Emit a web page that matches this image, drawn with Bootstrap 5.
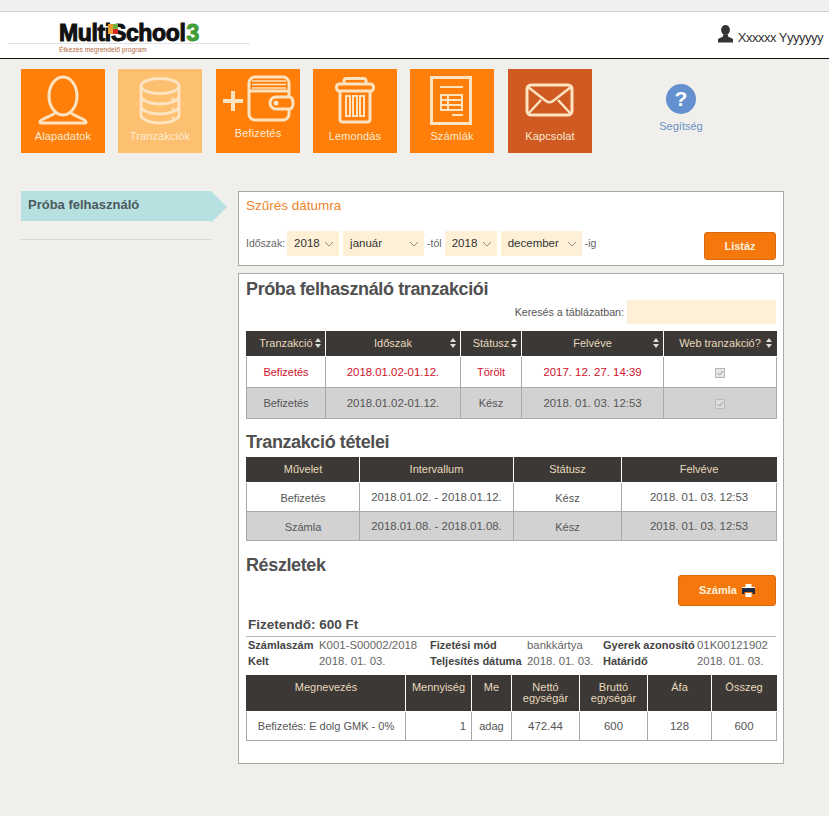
<!DOCTYPE html>
<html lang="hu">
<head>
  <meta charset="UTF-8" />
  <meta name="viewport" content="width=device-width, initial-scale=1.0" />
  <title>MultiSchool3</title>
  <link rel="stylesheet" href="https://cdn.jsdelivr.net/npm/bootstrap@5.3.0/dist/css/bootstrap.min.css">
  <style>
    body {
      font-family: "Liberation Sans", Arial, sans-serif;
      font-size: 11px;
      background-color: #f1efeb;
      color: #555;
      height: 816px;
      overflow: hidden;
    }
    .top-strip { height: 12px; background: #f0f0f0; border-bottom: 1px solid #ccc; }
    .site-head { height: 47px; background: #fff; border-bottom: 1px solid #111; padding-right: 6px; }
    .logo-box { width: 250px; height: 46px; position: relative; }
    .logo-rule { position: absolute; left: 8px; right: 0; top: 31px; border-top: 1px solid #e2e2e2; }
    .logo-name {
      position: absolute; left: 59px; top: 11px; font-size: 23px; line-height: 21px; font-weight: 700;
      color: #111; -webkit-text-stroke: 1px #111; letter-spacing: -.35px; white-space: nowrap;
    }
    .logo-name b { color: #3f9e35; -webkit-text-stroke: 1px #3f9e35; margin-left: 1px; }
    .logo-dots { position: absolute; left: 108px; top: 12px; }
    .logo-sub { position: absolute; left: 59px; top: 33px; font-size: 6.7px; line-height: 9px; color: #b5683c; white-space: nowrap; }
    .user-name { font-size: 13px; line-height: 16px; color: #333; letter-spacing: -.5px; align-self: flex-start; padding-top: 13px; }
    .user-name span { margin-top: 5px; }
    .tile-row { padding: 10px 0 0 21px; height: 132px; }
    .tile {
      width: 84px; height: 84px; background: #ff7f0a; color: #fdebd3; margin-right: 13px;
      text-decoration: none; font-size: 11px; letter-spacing: .15px; text-align: center; display: block; padding-top: 6px;
    }
    .tile svg { display: block; height: 50px; width: 84px; }
    .tile span { display: block; margin-top: 4px; line-height: 14px; }
    .tile.tile-soft { background: #fdc070; }
    .tile.tile-dark { background: #cf5a22; }
    .tile.tile-up span { margin-top: 1px; }
    .tile.tile-shift { margin-left: 1px; }
    .help-tile { width: 84px; margin-left: 34px; text-align: center; color: #6b90c8; padding-top: 15px; }
    .help-tile i {
      display: block; width: 30px; height: 30px; margin: 0 auto 4px; border-radius: 50%; background: #6590cf;
      color: #fff; font-style: normal; font-weight: 700; font-size: 21px; line-height: 30px;
    }
    .page-body { padding: 0 0 0 21px; }
    .side-col { width: 217px; flex: none; }
    .side-title {
      height: 30px; width: 190px; background: #b7e0e0; color: #4b5a5c; font-weight: 700; font-size: 13px;
      line-height: 27px; padding-left: 7px; position: relative; white-space: nowrap;
    }
    .side-title::after {
      content: ""; position: absolute; left: 100%; top: 0;
      border-left: 16px solid #b7e0e0; border-top: 16px solid transparent; border-bottom: 16px solid transparent;
    }
    .side-rule { width: 190px; margin-top: 18px; border-top: 1px solid #d8d6d2; }
    .main-col { width: 546px; flex: none; }
    .panel-box { background: #fff; border: 1px solid #a9a9a5; padding: 0 7px; }
    .filter-panel { height: 75px; margin-bottom: 7px; }
    .filter-title { color: #f0842c; font-size: 13.5px; line-height: 18px; padding-top: 5px; height: 39px; }
    .filter-row { font-size: 10.5px; color: #666; }
    .filter-row .form-select {
      width: auto; height: 25px; padding: 0 0 0 7px; border: 0; border-radius: 0; background-color: #fdf0d7;
      color: #333; font-size: 11.5px; flex: none;
      background-size: 10px 6px; background-position: right 5px center;
      background-image: url("data:image/svg+xml,%3csvg xmlns='http://www.w3.org/2000/svg' viewBox='0 0 10 6'%3e%3cpath fill='none' stroke='%23777' stroke-width='.8' d='M1 1l4 4 4-4'/%3e%3c/svg%3e");
    }
    .sel-year { flex-basis: 52px !important; width: 52px !important; margin-right: 4px; }
    .sel-month { flex-basis: 81px !important; width: 81px !important; }
    .range-word { line-height: 25px; }
    .range-from { margin: 0 3px; }
    .range-to { margin-left: 3px; }
    .range-lead { margin-right: 2px; }
    .orange-btn {
      background: #f6780c; border: 1px solid #d9690c; border-radius: 3px; color: #fdf0df; font-weight: 700;
      font-size: 11px; padding: 0; line-height: 1;
    }
    .orange-btn:hover { background: #e56e08; color: #fff; }
    .list-btn { width: 72px; height: 28px; margin-left: auto; margin-top: 1px; }
    .result-panel { height: 491px; }
    .box-head { color: #505050; font-size: 18px; letter-spacing: -.38px; line-height: 22px; font-weight: 700; margin: 0; }
    .box-first { padding-top: 4px; }
    .search-row { height: 24px; margin-bottom: 7px; font-size: 10.7px; color: #555; }
    .search-row .form-control {
      width: 149px; height: 24px; border: 0; border-radius: 0; background: #fdf0d7; margin-left: 3px; padding: 0 5px;
    }
    .grid-tbl { width: 530px; table-layout: fixed; border-collapse: collapse; margin: 0; font-size: 11px; }
    .grid-tbl th {
      background: #3b3835; color: #e8d9bd; font-weight: 400; text-align: center; vertical-align: middle;
      padding: 0 2px; border: 1px solid #fff; border-top: 0; position: relative; line-height: 11px;
    }
    .grid-tbl th:first-child { border-left-color: #3b3835; }
    .grid-tbl th:last-child { border-right-color: #3b3835; }
    .grid-tbl td {
      text-align: center; vertical-align: middle; padding: 2px 2px 0; border: 1px solid #a9a9a9; color: #555; background: #fff;
    }
    .grid-tbl td.digits { font-size: 11.4px; }
    .grid-tbl .row-gray td { background: #d2d2d2; }
    .grid-tbl .row-red td { color: #d0102a; }
    .sort-mark { position: absolute; right: 4px; top: 50%; margin-top: -5px; width: 6px; height: 10px; }
    .tick-box { display: block; margin: 0 auto; width: 10px; height: 10px; }
    .tbl-main .hrow { height: 25px; }
    .tbl-main .brow { height: 31px; }
    .tbl-items .hrow { height: 26px; }
    .tbl-items .brow { height: 29px; }
    .h-second { margin-top: 12px; margin-bottom: 4px; }
    .h-third { margin-top: 13px; }
    .invoice-btn-row { height: 31px; margin-top: -1px; }
    .invoice-btn { width: 98px; height: 31px; margin-left: auto; display: flex; align-items: center; justify-content: center; gap: 5px; }
    .pay-line {
      margin: 9px 0 0; padding: 0 2px; height: 22px; font-size: 13.5px; line-height: 19px; font-weight: 700; color: #4a4a4a;
      border-bottom: 1px solid #b5b5b5; width: 530px;
    }
    .facts { width: 530px; padding-left: 2px; font-size: 11px; line-height: 16px; color: #666; height: 38px; white-space: nowrap; }
    .facts b { color: #444; }
    .facts span { font-size: 11.4px; }
    .f1 { width: 71px; } .f2 { width: 111px; } .f3 { width: 97px; } .f4 { width: 76px; } .f5 { width: 94px; } .f6 { flex: 1; }
    .tbl-invoice th { vertical-align: top; padding-top: 7px; }
    .tbl-invoice .hrow { height: 36px; }
    .tbl-invoice .brow { height: 29px; }
    .tbl-invoice td.num-right { text-align: right; padding-right: 5px; }
    .c1a { width: 79px; } .c1b { width: 135px; } .c1c { width: 61px; } .c1d { width: 142px; } .c1e { width: 113px; }
    .c2a { width: 113px; } .c2b { width: 154px; } .c2c { width: 108px; } .c2d { width: 155px; }
    .c3a { width: 159px; } .c3b { width: 66px; } .c3c { width: 40px; } .c3d { width: 68px; } .c3e { width: 68px; } .c3f { width: 64px; } .c3g { width: 65px; }
  </style>
</head>
<body>
  <div class="top-strip"></div>
  <header class="site-head d-flex justify-content-between align-items-center">
    <div class="logo-box">
      <div class="logo-rule"></div>
      <div class="logo-name">MultiSchool<b>3</b></div>
      <svg class="logo-dots" width="10" height="10" viewBox="0 0 10 10">
        <rect x="0" y="0" width="5" height="5" fill="#e8962a"/><rect x="5" y="0" width="5" height="5" fill="#6fb23c"/>
        <rect x="0" y="5" width="5" height="5" fill="#f0a23a"/><rect x="5" y="5" width="5" height="5" fill="#d92a20"/>
      </svg>
      <div class="logo-sub">Étkezés megrendelő program</div>
    </div>
    <div class="d-flex align-items-start user-name">
      <svg width="17" height="18" viewBox="0 0 17 18" class="me-1"><ellipse cx="8.500" cy="5" rx="4.400" ry="5" fill="#333"/><path d="M6 9.500v2L1 14v3.500h15V14l-5-2.500v-2z" fill="#333"/></svg>
      <span>Xxxxxx Yyyyyyy</span>
    </div>
  </header>

  <nav class="tile-row d-flex">
    <a class="tile" href="#">
      <svg viewBox="0 0 84 50" fill="none" stroke="#fde3c0" stroke-width="3"><ellipse cx="42" cy="21" rx="14" ry="19"/><path d="M35 36c0 5-16 7-16 11 0 .6.500 1 1 1h44c.6 0 1-.4 1-1 0-4-16-6-16-11"/></svg>
      <span>Alapadatok</span>
    </a>
    <a class="tile tile-soft" href="#">
      <svg viewBox="0 0 84 50" fill="none" stroke="#fde3c0" stroke-width="3"><ellipse cx="42" cy="11" rx="19" ry="7.500"/><path d="M23 11v29c0 4 8 8 19 8s19-4 19-8V11M23 21c0 4 8 8 19 8s19-4 19-8M23 31c0 4 8 8 19 8s19-4 19-8"/><g fill="#fde3c0" stroke="none"><circle cx="55" cy="24" r="1.500"/><circle cx="55" cy="34" r="1.500"/><circle cx="55" cy="43" r="1.500"/></g></svg>
      <span>Tranzakciók</span>
    </a>
    <a class="tile tile-up tile-shift" href="#">
      <svg viewBox="0 0 84 50" fill="none" stroke="#fde3c0" stroke-width="3"><path d="M7 26h20M17 16v20" stroke-width="4"/><rect x="33" y="2" width="40" height="43" rx="6"/><path d="M36 6h34M36 9.500h34M36 13h34" stroke-width="1.500"/><path d="M33 16h40"/><path d="M73 22h-13a6 6 0 0 0 0 12h13c3 0 4-3 4-6s-1-6-4-6z" fill="#ff7f0a"/><circle cx="60" cy="28" r="2.500" fill="#fde3c0" stroke="none"/></svg>
      <span>Befizetés</span>
    </a>
    <a class="tile" href="#">
      <svg viewBox="0 0 84 50" fill="none" stroke="#fde3c0" stroke-width="3"><path d="M31 9V6c0-1.500 1-2.500 2.500-2.500h17C52 3.500 53 4.500 53 6v3"/><rect x="23.500" y="9" width="37" height="7" rx="3"/><path d="M27 16v28c0 2 1 3 3 3h24c2 0 3-1 3-3V16"/><rect x="33" y="21" width="4" height="20" stroke-width="2"/><rect x="40" y="21" width="4" height="20" stroke-width="2"/><rect x="47" y="21" width="4" height="20" stroke-width="2"/></svg>
      <span>Lemondás</span>
    </a>
    <a class="tile" href="#">
      <svg viewBox="0 0 84 50" fill="none" stroke="#fde3c0" stroke-width="3"><rect x="21.500" y="2.500" width="39" height="46"/><path d="M30 12h23M42 40h11" stroke-width="2"/><rect x="31" y="20" width="21" height="15" stroke-width="2"/><path d="M31 25h21M31 30h21M38 20v15" stroke-width="2"/></svg>
      <span>Számlák</span>
    </a>
    <a class="tile tile-dark tile-shift" href="#">
      <svg viewBox="0 0 84 50" fill="none" stroke="#fde3c0" stroke-width="3"><rect x="19" y="10" width="45" height="30" rx="4"/><path d="M20 12l18 14c2 1.500 5 1.500 7 0l18-14M20 39l13-14M63 39L50 25" stroke-width="2.500"/></svg>
      <span>Kapcsolat</span>
    </a>
    <a class="help-tile text-decoration-none" href="#"><i>?</i>Segítség</a>
  </nav>

  <div class="page-body d-flex">
    <aside class="side-col">
      <div class="side-title">Próba felhasználó</div>
      <div class="side-rule"></div>
    </aside>
    <main class="main-col">
      <section class="panel-box filter-panel">
        <div class="filter-title">Szűrés dátumra</div>
        <div class="filter-row d-flex align-items-start">
          <span class="range-word range-lead">Időszak:</span>
          <select class="form-select sel-year"><option>2018</option></select>
          <select class="form-select sel-month"><option>január</option></select>
          <span class="range-word range-from">-tól</span>
          <select class="form-select sel-year"><option>2018</option></select>
          <select class="form-select sel-month"><option>december</option></select>
          <span class="range-word range-to">-ig</span>
          <button class="btn orange-btn list-btn" type="button">Listáz</button>
        </div>
      </section>

      <section class="panel-box result-panel">
        <h2 class="box-head box-first">Próba felhasználó tranzakciói</h2>
        <div class="search-row d-flex justify-content-end align-items-center">
          <label for="tblSearch">Keresés a táblázatban:</label>
          <input id="tblSearch" class="form-control" type="text">
        </div>
        <table class="grid-tbl tbl-main">
          <colgroup><col class="c1a"><col class="c1b"><col class="c1c"><col class="c1d"><col class="c1e"></colgroup>
          <thead><tr class="hrow">
            <th>Tranzakció<svg class="sort-mark" viewBox="0 0 6 10"><path d="M3 0l3 4H0zM3 10L0 6h6z" fill="#ddd"/></svg></th>
            <th>Időszak<svg class="sort-mark" viewBox="0 0 6 10"><path d="M3 0l3 4H0zM3 10L0 6h6z" fill="#ddd"/></svg></th>
            <th>Státusz<svg class="sort-mark" viewBox="0 0 6 10"><path d="M3 0l3 4H0zM3 10L0 6h6z" fill="#ddd"/></svg></th>
            <th>Felvéve<svg class="sort-mark" viewBox="0 0 6 10"><path d="M3 0l3 4H0zM3 10L0 6h6z" fill="#ddd"/></svg></th>
            <th>Web tranzakció?<svg class="sort-mark" viewBox="0 0 6 10"><path d="M3 0l3 4H0zM3 10L0 6h6z" fill="#ddd"/></svg></th>
          </tr></thead>
          <tbody>
            <tr class="brow row-red"><td>Befizetés</td><td class="digits">2018.01.02-01.12.</td><td>Törölt</td><td class="digits">2017. 12. 27. 14:39</td><td><svg class="tick-box" viewBox="0 0 10 10"><rect x=".5" y=".5" width="9" height="9" fill="#e6e6e6" stroke="#b5b5b5"/><path d="M2.500 5l2 2 3.500-4" fill="none" stroke="#8f8f8f"/></svg></td></tr>
            <tr class="brow row-gray"><td>Befizetés</td><td class="digits">2018.01.02-01.12.</td><td>Kész</td><td class="digits">2018. 01. 03. 12:53</td><td><svg class="tick-box" viewBox="0 0 10 10"><rect x=".5" y=".5" width="9" height="9" fill="#dcdcdc" stroke="#bdbdbd"/><path d="M2.500 5l2 2 3.500-4" fill="none" stroke="#999"/></svg></td></tr>
          </tbody>
        </table>

        <h2 class="box-head h-second">Tranzakció tételei</h2>
        <table class="grid-tbl tbl-items">
          <colgroup><col class="c2a"><col class="c2b"><col class="c2c"><col class="c2d"></colgroup>
          <thead><tr class="hrow"><th>Művelet</th><th>Intervallum</th><th>Státusz</th><th>Felvéve</th></tr></thead>
          <tbody>
            <tr class="brow"><td>Befizetés</td><td class="digits">2018.01.02. - 2018.01.12.</td><td>Kész</td><td class="digits">2018. 01. 03. 12:53</td></tr>
            <tr class="brow row-gray"><td>Számla</td><td class="digits">2018.01.08. - 2018.01.08.</td><td>Kész</td><td class="digits">2018. 01. 03. 12:53</td></tr>
          </tbody>
        </table>

        <h2 class="box-head h-third">Részletek</h2>
        <div class="invoice-btn-row d-flex">
          <button class="btn orange-btn invoice-btn" type="button">Számla
            <svg width="13" height="13" viewBox="0 0 13 13"><path d="M3.500 0h6v3.500h-6z" fill="#fff"/><path d="M0 4h13v6h-2.500V8h-8v2H0z" fill="#1f2a44"/><path d="M3.500 9h6v4h-6z" fill="#fff"/><path d="M0 3.500h13" stroke="#fff"/></svg>
          </button>
        </div>
        <div class="pay-line">Fizetendő: 600 Ft</div>
        <div class="facts">
          <div class="d-flex">
            <b class="f1">Számlaszám</b><span class="f2">K001-S00002/2018</span><b class="f3">Fizetési mód</b><span class="f4">bankkártya</span><b class="f5">Gyerek azonosító</b><span class="f6">01K00121902</span>
          </div>
          <div class="d-flex">
            <b class="f1">Kelt</b><span class="f2">2018. 01. 03.</span><b class="f3">Teljesítés dátuma</b><span class="f4">2018. 01. 03.</span><b class="f5">Határidő</b><span class="f6">2018. 01. 03.</span>
          </div>
        </div>
        <table class="grid-tbl tbl-invoice">
          <colgroup><col class="c3a"><col class="c3b"><col class="c3c"><col class="c3d"><col class="c3e"><col class="c3f"><col class="c3g"></colgroup>
          <thead><tr class="hrow"><th>Megnevezés</th><th>Mennyiség</th><th>Me</th><th>Nettó<br>egységár</th><th>Bruttó<br>egységár</th><th>Áfa</th><th>Összeg</th></tr></thead>
          <tbody><tr class="brow"><td>Befizetés: E dolg GMK - 0%</td><td class="num-right digits">1</td><td>adag</td><td class="digits">472.44</td><td class="digits">600</td><td class="digits">128</td><td class="digits">600</td></tr></tbody>
        </table>
      </section>
    </main>
  </div>
</body>
</html>
